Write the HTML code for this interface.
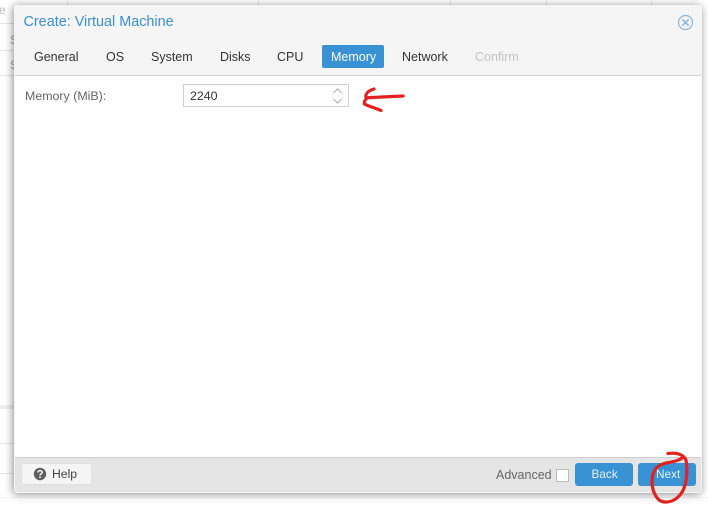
<!DOCTYPE html>
<html><head><meta charset="utf-8">
<style>
html,body{margin:0;padding:0;background:#fff;width:708px;height:506px;overflow:hidden}
#w{position:absolute;left:0;top:0;width:708px;height:506px;overflow:hidden;font-family:"Liberation Sans",sans-serif;font-size:12.5px;filter:blur(.35px)}
.a{position:absolute;white-space:nowrap}
.bgl{position:absolute;background:#e6e6e6}
#dlg{position:absolute;left:14px;top:5px;width:688px;height:488px;background:#f5f5f5;border-radius:3px;box-shadow:-1px 1px 9px rgba(0,0,0,.45)}
.tab{position:absolute;top:50px;font-size:12.5px;color:#333;line-height:14px;white-space:nowrap}
</style></head>
<body>
<div id="w">
<div class="bgl" style="left:67px;top:0;width:1px;height:5px"></div>
<div class="bgl" style="left:258px;top:0;width:1px;height:5px"></div>
<div class="bgl" style="left:450px;top:0;width:1px;height:5px"></div>
<div class="bgl" style="left:546px;top:0;width:1px;height:5px"></div>
<div class="bgl" style="left:651px;top:0;width:1px;height:5px"></div>
<div class="bgl" style="left:0;top:23px;width:14px;height:1px"></div>
<div class="bgl" style="left:0;top:50px;width:14px;height:1px"></div>
<div class="bgl" style="left:0;top:75px;width:14px;height:1px"></div>
<div class="bgl" style="left:0;top:405px;width:14px;height:4px;background:#eee"></div>
<div class="bgl" style="left:0;top:443px;width:14px;height:1px"></div>
<div class="bgl" style="left:0;top:473px;width:14px;height:1px"></div>
<div class="bgl" style="left:0;top:497px;width:708px;height:1px;background:#f4f4f4"></div>
<div class="a" style="left:-1px;top:3px;font-size:12px;color:#bbb">e</div>
<div class="a" style="left:10px;top:33px;font-size:12px;color:#aaa">S</div>
<div class="a" style="left:10px;top:58px;font-size:12px;color:#aaa">S</div>

<div id="dlg"></div>
<div class="a" style="left:15px;top:75px;width:686px;height:383px;background:#fff;border-top:1px solid #d4d4d4;border-bottom:1px solid #cfcfcf;box-sizing:border-box"></div>
<div class="a" style="left:15px;top:458px;width:686px;height:34px;background:#e5e5e5"></div>

<div class="a" style="left:23.5px;top:14px;font-size:14.4px;line-height:17px;color:#3d8fd1">Create: Virtual Machine</div>
<svg class="a" style="left:677px;top:14px" width="17" height="17" viewBox="0 0 17 17" fill="none" stroke="#8bb6dc" stroke-width="1.2"><circle cx="8.5" cy="8.5" r="7"/><path d="M5.3 5.3L11.7 11.7M11.7 5.3L5.3 11.7" stroke-width="1.5"/></svg>

<div class="tab" style="left:34px">General</div>
<div class="tab" style="left:106px">OS</div>
<div class="tab" style="left:151px">System</div>
<div class="tab" style="left:220px">Disks</div>
<div class="tab" style="left:277px">CPU</div>
<div class="a" style="left:322px;top:45px;width:62px;height:23px;background:#3892d4;border-radius:2px"></div>
<div class="tab" style="left:331px;color:#fff">Memory</div>
<div class="tab" style="left:402px">Network</div>
<div class="tab" style="left:475px;color:#c4c4c4">Confirm</div>

<div class="a" style="left:25px;top:89px;font-size:12.4px;line-height:14px;color:#666">Memory (MiB):</div>
<div class="a" style="left:183px;top:84px;width:166px;height:23px;box-sizing:border-box;border:1px solid #cfcfcf;background:#fff"></div>
<div class="a" style="left:190px;top:89px;font-size:12.4px;line-height:14px;color:#333">2240</div>
<svg class="a" style="left:331px;top:87px" width="13" height="18" viewBox="0 0 13 18" fill="none" stroke="#b5b5b5" stroke-width="1.2"><path d="M2.5 6L6.5 2L10.5 6M2.5 12L6.5 16L10.5 12"/></svg>

<div class="a" style="left:21px;top:463px;width:71px;height:22px;background:#f5f5f5;border:1px solid #e0e0e0;border-radius:3px;box-sizing:border-box"></div>
<svg class="a" style="left:33px;top:467px" width="14" height="14" viewBox="0 0 14 14"><circle cx="7" cy="7" r="6.2" fill="#5f5f5f"/><path d="M4.9 5.5C4.9 3 9.2 3 9.2 5.4C9.2 6.9 7 6.8 7 8.4" fill="none" stroke="#f5f5f5" stroke-width="1.5"/><rect x="6.2" y="9.4" width="1.6" height="1.6" fill="#f5f5f5"/></svg>
<div class="a" style="left:52px;top:467px;font-size:12.2px;line-height:14px;color:#444">Help</div>

<div class="a" style="left:496px;top:468px;font-size:12.5px;line-height:14px;color:#666">Advanced</div>
<div class="a" style="left:556px;top:469px;width:13px;height:13px;box-sizing:border-box;background:#fff;border:1px solid #bbb"></div>

<div class="a" style="left:575px;top:463px;width:58px;height:23px;background:#3892d4;border-radius:3px"></div>
<div class="a" style="left:591.500px;top:467px;font-size:11.800px;line-height:14px;color:#e8f3fb">Back</div>
<div class="a" style="left:638px;top:463px;width:58px;height:23px;background:#3892d4;border-radius:3px"></div>
<div class="a" style="left:656px;top:467px;font-size:11.800px;line-height:14px;color:#e8f3fb">Next</div>

<svg class="a" style="left:0;top:0" width="708" height="506" viewBox="0 0 708 506" fill="none" stroke="#e3211f" stroke-linecap="round" stroke-linejoin="round">
<path stroke-width="3.2" d="M374 89C370 90 367 92 366 95C365 98 367 98 372 97.500C382 97 392 96.500 403 96"/>
<path stroke-width="3.2" d="M367 98C365 100 363.500 102 364.500 104C368 106 375 108 381 110.500"/>
<path stroke-width="3.200" d="M668 453.500C676 452.500 683 454 686 460C688 470 687 487 680 495C674 502 665 504 659 500C653 494 651 485 652.500 476C654 469 658 465 666 463C672 462 678 461 682 458"/>
</svg>
</div>
</body></html>
